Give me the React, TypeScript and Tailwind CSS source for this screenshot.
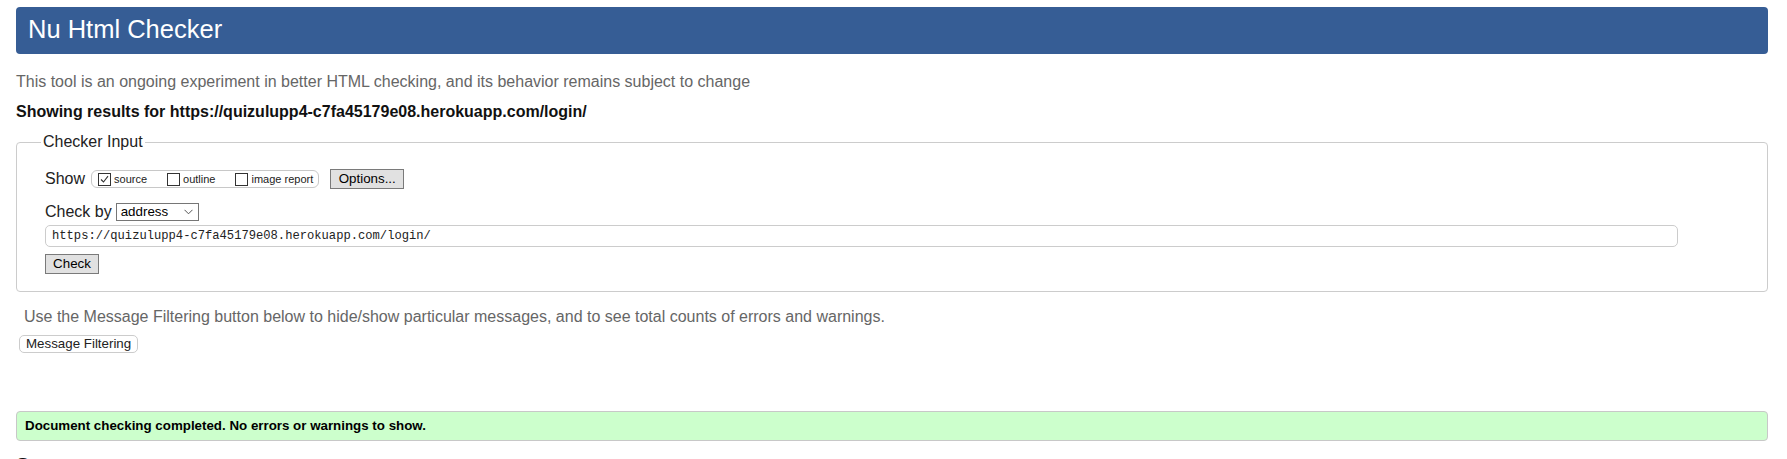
const CheckBox = ({ checked }: { checked?: boolean }) => (
    <span className="flex h-[13px] w-[13px] shrink-0 items-center justify-center border border-[#333] bg-white">
        {checked && (
            <svg width="9" height="9" viewBox="0 0 9 9">
                <path d="M1 4.5 L3.5 7 L8 1.2" fill="none" stroke="#333" strokeWidth="1.1" />
            </svg>
        )}
    </span>
);

const ShowOption = (props: { label: string; checked?: boolean }) => (
    <label className="flex items-center gap-[3px] text-[11px] leading-none text-[#222]">
        <CheckBox checked={props.checked} />
        <span>{props.label}</span>
    </label>
);

export default function App() {
    return (
        <div className="min-h-screen bg-white pl-4 pr-[19px] font-['Liberation_Sans',Arial,sans-serif] text-[#222]">
            <h1 className="mt-[7px] flex h-[47px] items-center rounded-[4px] bg-[#365d95] pb-[2px] pl-3 text-[25.5px] font-normal text-white">
                Nu Html Checker
            </h1>

            <p className="mt-[19px] text-[16px] leading-[18px] text-[#666]">
                This tool is an ongoing experiment in better HTML checking, and its behavior remains subject to change
            </p>

            <p className="mt-[12px] text-[16px] font-bold leading-[18px] text-[#111]">
                Showing results for https://quizulupp4-c7fa45179e08.herokuapp.com/login/
            </p>

            <fieldset className="mt-3 rounded-[4px] border border-[#ccc] pb-[17px] pl-[28px] pr-[89px]">
                <legend className="-ml-[4px] px-[2px] text-[16px] leading-[18px] text-[#222]">
                    Checker Input
                </legend>

                <div className="mt-[18px] flex h-[20px] items-center">
                    <span className="text-[16px] leading-[18px]">Show</span>
                    <div className="ml-[6px] flex h-[18px] items-center gap-[20px] rounded-[6px] border border-[#c8c8c8] pl-[6px] pr-[5px]">
                        <ShowOption label="source" checked />
                        <ShowOption label="outline" />
                        <ShowOption label="image report" />
                    </div>
                    <button className="ml-[11px] h-[20px] w-[74px] border border-[#7a7a7a] bg-[#e1e1e1] text-[13.33px] leading-none text-black">
                        Options...
                    </button>
                </div>

                <div className="mt-[13px] flex h-[20px] items-center">
                    <span className="text-[16px] leading-[18px]">Check by</span>
                    <div className="ml-[4px] flex h-[18px] w-[83px] items-center justify-between border border-[#767676] bg-white pl-[4px] pr-[5px] text-[13.33px] leading-none text-black">
                        <span>address</span>
                        <svg width="9" height="6" viewBox="0 0 9 6">
                            <path d="M0.5 0.8 L4.5 4.8 L8.5 0.8" fill="none" stroke="#555" strokeWidth="1" />
                        </svg>
                    </div>
                </div>

                <div className="mt-[3px] flex h-[22px] items-center rounded-[5px] border border-[#ccc] bg-white pl-[6px] font-['Liberation_Mono',monospace] text-[12.15px] text-[#222]">
                    https://quizulupp4-c7fa45179e08.herokuapp.com/login/
                </div>

                <button className="mt-[7px] block h-[20px] w-[54px] border border-[#7a7a7a] bg-[#e1e1e1] text-[13.33px] leading-none text-black">
                    Check
                </button>
            </fieldset>

            <p className="mt-[16px] pl-[8px] text-[16px] leading-[18px] text-[#666]">
                Use the Message Filtering button below to hide/show particular messages, and to see total counts of errors and warnings.
            </p>

            <button className="ml-[3px] mt-[9px] block h-[18px] rounded-[5px] border border-[#ccc] bg-white px-[6px] text-[13.33px] leading-none text-[#222]">
                Message Filtering
            </button>

            <div className="mt-[58px] flex h-[30px] items-center rounded-[4px] border border-[#c8c8c8] bg-[#ccffcc] pl-[8px] text-[13.33px] font-bold text-black">
                Document checking completed. No errors or warnings to show.
            </div>

            <h2 className="mt-[12px] text-[20px] font-bold leading-[24px] text-[#111]">Source</h2>
        </div>
    );
}
